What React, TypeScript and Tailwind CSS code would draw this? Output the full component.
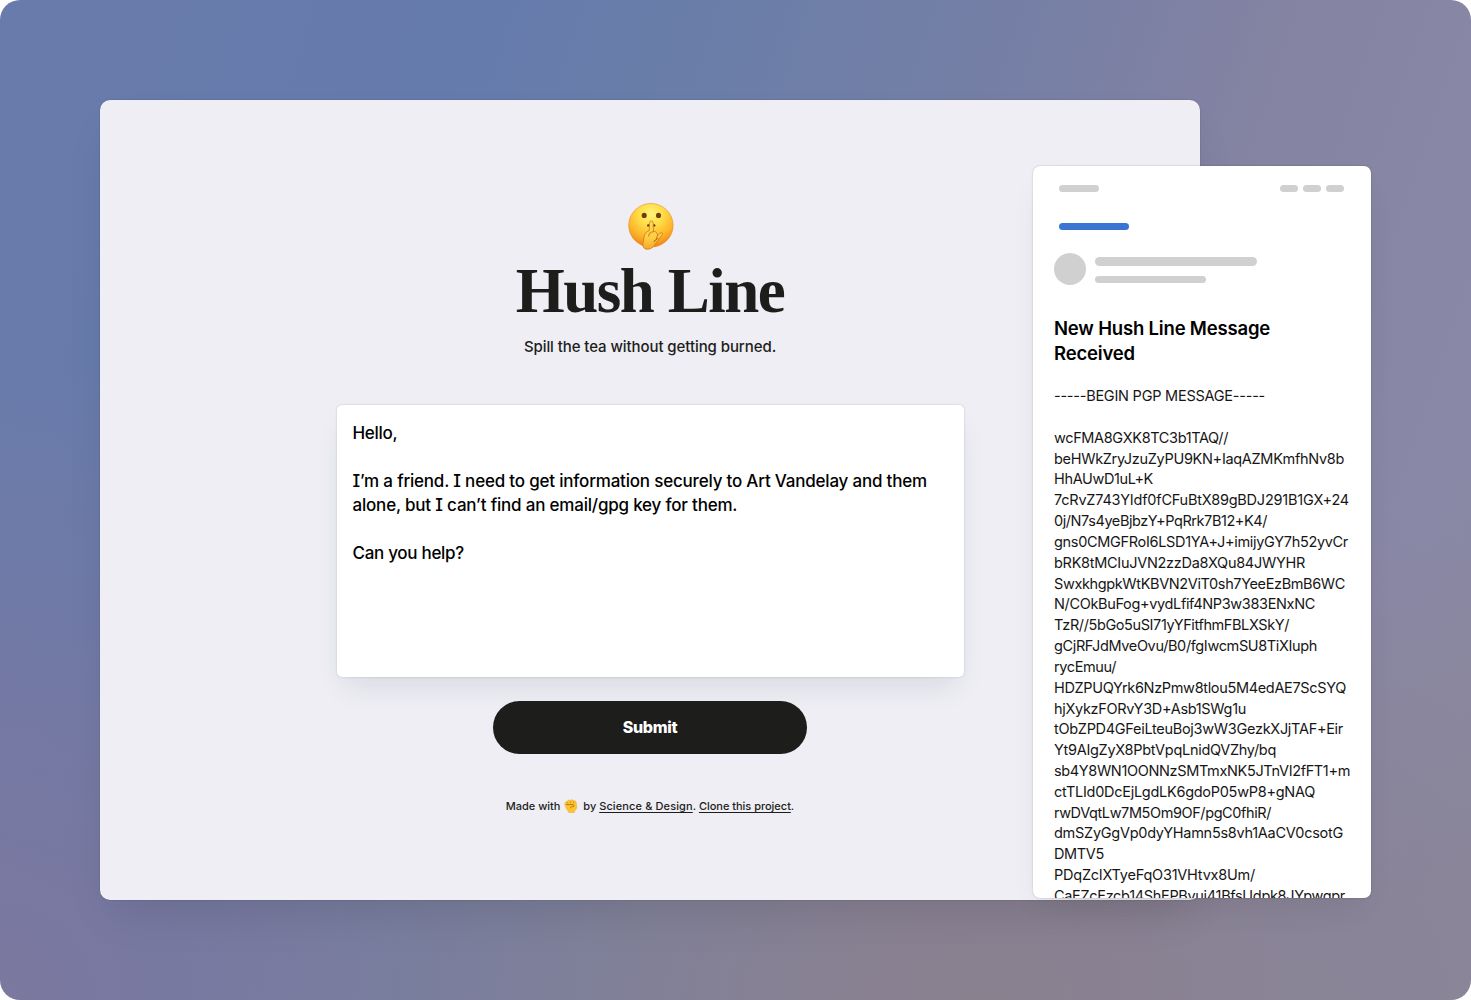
import { useLayoutEffect, useRef, useState } from 'react';

type Line = { text: string; width: number };

const pgpHeader: Line = { text: '-----BEGIN PGP MESSAGE-----', width: 211 };

const pgpLines: Line[] = [
  { text: 'wcFMA8GXK8TC3b1TAQ//', width: 174 },
  { text: 'beHWkZryJzuZyPU9KN+IaqAZMKmfhNv8b', width: 290 },
  { text: 'HhAUwD1uL+K', width: 99 },
  { text: '7cRvZ743YIdf0fCFuBtX89gBDJ291B1GX+24', width: 295 },
  { text: '0j/N7s4yeBjbzY+PqRrk7B12+K4/', width: 213 },
  { text: 'gns0CMGFRoI6LSD1YA+J+imijyGY7h52yvCr', width: 294 },
  { text: 'bRK8tMCIuJVN2zzDa8XQu84JWYHR', width: 251 },
  { text: 'SwxkhgpkWtKBVN2ViT0sh7YeeEzBmB6WC', width: 291 },
  { text: 'N/COkBuFog+vydLfif4NP3w383ENxNC', width: 261 },
  { text: 'TzR//5bGo5uSI71yYFitfhmFBLXSkY/', width: 235 },
  { text: 'gCjRFJdMveOvu/B0/fgIwcmSU8TiXIuph', width: 263 },
  { text: 'rycEmuu/', width: 62 },
  { text: 'HDZPUQYrk6NzPmw8tlou5M4edAE7ScSYQ', width: 292 },
  { text: 'hjXykzFORvY3D+Asb1SWg1u', width: 192 },
  { text: 'tObZPD4GFeiLteuBoj3wW3GezkXJjTAF+Eir', width: 289 },
  { text: 'Yt9AIgZyX8PbtVpqLnidQVZhy/bq', width: 222 },
  { text: 'sb4Y8WN1OONNzSMTmxNK5JTnVI2fFT1+m', width: 296 },
  { text: 'ctTLId0DcEjLgdLK6gdoP05wP8+gNAQ', width: 261 },
  { text: 'rwDVqtLw7M5Om9OF/pgC0fhiR/', width: 217 },
  { text: 'dmSZyGgVp0dyYHamn5s8vh1AaCV0csotG', width: 289 },
  { text: 'DMTV5', width: 50 },
  { text: 'PDqZcIXTyeFqO31VHtvx8Um/', width: 201 },
  { text: 'CaEZcEzcb14ShEPByuj41BfsUdpk8JYpwgpr', width: 291 },
];

// Tracks a line so that it sets to the given measure.
function FittedLine({ text, width }: Line) {
  const ref = useRef<HTMLSpanElement>(null);
  const [tracking, setTracking] = useState(0);
  useLayoutEffect(() => {
    const natural = ref.current!.getBoundingClientRect().width;
    setTracking((width - natural) / text.length);
  }, [text, width]);
  return (
    <div className="whitespace-nowrap">
      <span ref={ref} style={{ letterSpacing: tracking }}>
        {text}
      </span>
    </div>
  );
}

function ShushEmoji() {
  return (
    <svg viewBox="0 0 46 47" className="ml-[1px] h-[47px] w-[46px] shrink-0" aria-hidden="true">
      <defs>
        <radialGradient id="face" cx="0.5" cy="0.24" r="0.8">
          <stop offset="0" stopColor="#fff27a" />
          <stop offset="0.32" stopColor="#ffdf4a" />
          <stop offset="0.68" stopColor="#fdb52a" />
          <stop offset="1" stopColor="#ea7c12" />
        </radialGradient>
        <linearGradient id="hand" x1="0" y1="0" x2="0" y2="1">
          <stop offset="0" stopColor="#ffd850" />
          <stop offset="0.6" stopColor="#ffce46" />
          <stop offset="1" stopColor="#f4a826" />
        </linearGradient>
      </defs>
      <ellipse cx="22.9" cy="22.3" rx="22.2" ry="21.8" fill="url(#face)" stroke="#e98a1c" strokeWidth="0.6" />
      <ellipse cx="16.2" cy="12.4" rx="2.5" ry="2.7" fill="#6f3c0c" />
      <ellipse cx="30.5" cy="12.4" rx="2.5" ry="2.7" fill="#6f3c0c" />
      <circle cx="20.3" cy="22.4" r="1.2" fill="#5b2c0c" />
      <circle cx="26.2" cy="22.4" r="1.2" fill="#5b2c0c" />
      <path
        d="M21.6 19.6c0-2.3 3.4-2.3 3.5 0l.4 8.6c2.9.3 4.3 2.200 4 4.800l2.600-2.700c1.500-1.400 3.100-.1 2.100 1.500l-5.900 7.700c-2 3.600-4.500 6.700-9 6.700-3.700 0-4.900-2.800-4.200-6.800l1.200-6.700c.5-2.5 2.300-4.200 4.900-5z"
        fill="url(#hand)"
        stroke="#c97a16"
        strokeWidth="0.8"
        strokeLinejoin="round"
      />
      <path
        d="M20.600 33c.4-2.600 2-4.200 4.700-4.300M29.200 33.400c-.4 2.400-1.800 4.200-3.500 5.400l4.400-3.600"
        fill="none"
        stroke="#b96c12"
        strokeWidth="0.9"
        strokeLinecap="round"
        strokeLinejoin="round"
      />
    </svg>
  );
}

function FistEmoji() {
  return (
    <svg viewBox="0 0 14 14" className="mr-[5px] ml-[4px] inline-block h-[14px] w-[14px] align-[-3px]" aria-hidden="true">
      <path
        d="M1.5 7.2C.4 6.3.5 5 1.2 4.1 1 2.9 2.3 2.3 3.4 2.5 3.6 1 5.6.5 6.5 1.5 7.4.3 9.3.6 9.7 1.8c1.7-.4 2.9.7 2.6 2.1l.5 3.4c.2 2.2-.9 3.6-2 4.3l-.3 1.7c-1.8.7-4.4.7-6.2 0L4 11.5C2.5 10.5 1.6 9.1 1.5 7.2z"
        fill="#fdc330"
        stroke="#eda226"
        strokeWidth="0.4"
      />
      <path d="M3.6 2.7v2.1M6.5 1.8v2.6M9.6 2v2.4" stroke="#c9861c" strokeWidth="0.6" fill="none" />
      <path
        d="M2.4 5.5c2 .8 4.2-.5 6.6.2 1.5.6 1.2 1.9-.2 1.9-1.2 0-2 .4-2.6 1.2"
        stroke="#a8640f"
        strokeWidth="0.8"
        fill="none"
        strokeLinecap="round"
      />
    </svg>
  );
}

function SubmissionPage() {
  return (
    <main className="flex h-[800px] w-[1100px] shrink-0 flex-col items-center rounded-[10px] bg-[#eeeef4] pt-[103px] text-[#1d1d1b] shadow-[0_0_2px_rgba(0,0,0,0.2),0_22px_44px_-14px_rgba(0,0,0,0.13)]">
      <ShushEmoji />
      <h1 className="mt-[5px] h-[72px] font-['Liberation_Serif',serif] text-[63px] leading-[72px] font-bold tracking-[-1.5px] whitespace-nowrap">
        Hush Line
      </h1>
      <p className="mt-[8px] text-[15px] leading-6 font-[450] tracking-[-0.08px]">Spill the tea without getting burned.</p>
      <div className="mt-[46px] h-[272px] w-[627px] rounded-[5px] bg-white px-[16px] pt-[16px] text-[17px] leading-6 font-[450] tracking-[-0.2px] text-black shadow-[0_0_2px_rgba(40,40,70,0.24),0_16px_28px_-8px_rgba(40,40,70,0.11)]">
        <p className="tracking-[-0.3px]">Hello,</p>
        <p className="mt-6 whitespace-nowrap">
          I’m a friend. I need to get information securely to Art Vandelay and them
          <br />
          alone, but I can’t find an email/gpg key for them.
        </p>
        <p className="mt-6 tracking-[-0.3px]">Can you help?</p>
      </div>
      <button className="mt-6 h-[53px] w-[314px] rounded-full bg-[#1d1d1b] pb-px text-[16px] font-extrabold tracking-[-0.35px] text-white">
        Submit
      </button>
      <p className="mt-[43px] text-[11px] leading-[18px] font-[450] tracking-[-0.02px] whitespace-nowrap">
        Made with
        <FistEmoji />
        by <a className="tracking-[0.12px] underline underline-offset-[1.5px]">Science &amp; Design</a>.{' '}
        <a className="underline underline-offset-[1.5px]">Clone this project</a>.
      </p>
    </main>
  );
}

function InboxPreview() {
  return (
    <aside className="mt-[66px] -ml-[167px] h-[732px] w-[338px] shrink-0 overflow-hidden rounded-[7px] bg-white px-[21px] text-black shadow-[0_0_2px_rgba(0,0,0,0.24),0_16px_32px_-10px_rgba(0,0,0,0.09)]">
      <div className="mt-[19px] flex items-center pr-[6px] pl-[5.4px]">
        <div className="h-[7px] w-[40px] rounded-full bg-[#d0d0d0]" />
        <div className="mr-[0.5px] ml-auto flex gap-[5.5px]">
          <div className="h-[7px] w-[17.5px] rounded-full bg-[#d0d0d0]" />
          <div className="h-[7px] w-[17.5px] rounded-full bg-[#d0d0d0]" />
          <div className="h-[7px] w-[17.5px] rounded-full bg-[#d0d0d0]" />
        </div>
      </div>
      <div className="mt-[31px] ml-[5.4px] h-[7px] w-[70px] rounded-full bg-[#3b75d4]" />
      <div className="mt-[22.5px] flex">
        <div className="size-[32.4px] rounded-full bg-[#d0d0d0]" />
        <div className="mt-[4.5px] ml-[8.5px]">
          <div className="h-[8.5px] w-[162.5px] rounded-full bg-[#d0d0d0]" />
          <div className="mt-[10.5px] h-[7px] w-[111px] rounded-full bg-[#d0d0d0]" />
        </div>
      </div>
      <h2 className="mt-[31.4px] text-[18.5px] leading-[24.5px] font-semibold tracking-[-0.18px]">
        New Hush Line Message
        <br />
        Received
      </h2>
      <div className="mt-[20.8px] text-[14.5px] leading-[20.83px] text-[#161616] [font-feature-settings:'cv08'_0]">
        <FittedLine {...pgpHeader} />
        <div className="mt-[20.83px]">
          {pgpLines.map((line) => (
            <FittedLine key={line.text} {...line} />
          ))}
        </div>
      </div>
    </aside>
  );
}

export default function App() {
  return (
    <div className="h-[1000px] w-[1471px] bg-white">
      <div className="flex h-full w-full overflow-hidden rounded-[20px] bg-[radial-gradient(ellipse_860px_560px_at_67%_100%,#8a818f_0%,#8a818fa0_40%,#8a818f00_100%),radial-gradient(ellipse_620px_640px_at_0%_100%,#7c789f_0%,#7c789fa0_45%,#7c789f00_100%),linear-gradient(108deg,#697bab_0%,#657bac_27%,#6b7ea8_42%,#767fa5_58%,#8483a2_72%,#8988a7_88%,#8a889e_100%)] p-[100px] font-[Inter,sans-serif] [font-feature-settings:'cv08']">
        <SubmissionPage />
        <InboxPreview />
      </div>
    </div>
  );
}
